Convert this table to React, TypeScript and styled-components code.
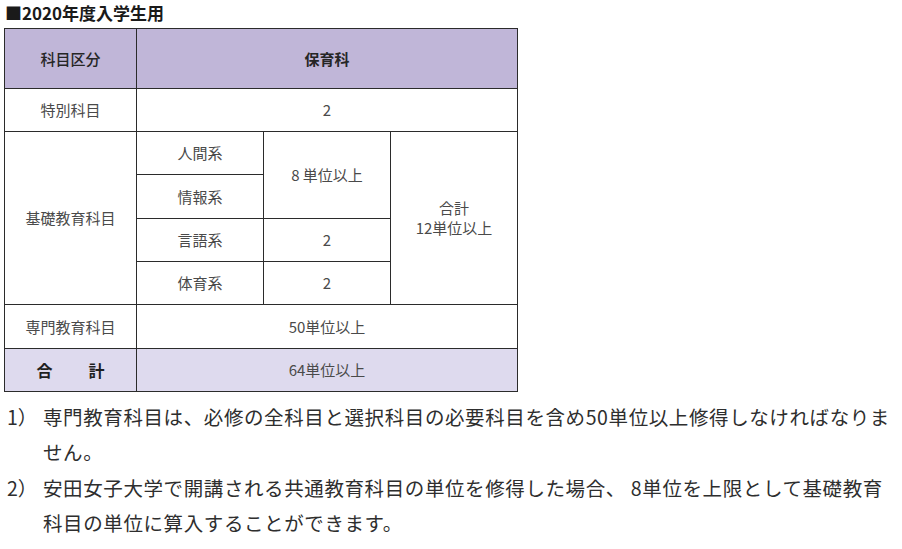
import React from 'react'
import styled, { createGlobalStyle } from 'styled-components'

const GlobalStyle = createGlobalStyle`
  body {
    margin: 0;
    background: #ffffff;
    font-family: "Noto Sans CJK JP", "Liberation Sans", sans-serif;
  }
`

const Page = styled.div`
  padding: 3px 0 0 4px;
  width: 898px;
`

const Title = styled.h2`
  margin: 0 0 5px 1px;
  font-size: 17px;
  line-height: 20px;
  font-weight: 700;
  color: #1a1a1a;
  letter-spacing: 0;
`

const Table = styled.table`
  border-collapse: collapse;
  table-layout: fixed;
  width: 514px;
  color: #4a4a4a;
  font-size: 15px;
  td, th {
    border: 1px solid #2b2b2b;
    text-align: center;
    vertical-align: middle;
    padding: 0;
    line-height: 20px;
  }
`

const Row = styled.tr<{ $h: number }>`
  height: ${p => p.$h}px;
`

const HeadCell = styled.th<{ $bold?: boolean }>`
  background: #c0b6d8;
  color: #262626;
  font-weight: ${p => (p.$bold ? 700 : 500)};
`

const Cell = styled.td`
  font-weight: 400;
`

const TotalLabel = styled.td`
  background: #dedaee;
  color: #1f1f1f;
  font-weight: 700 !important;
  font-size: 16px;
  span + span { margin-left: 36px; }
`

const TotalValue = styled.td`
  background: #dedaee;
`

const Notes = styled.ol`
  list-style: none;
  margin: 7px 0 0 0;
  padding: 0;
  color: #2e2e2e;
  font-size: 19.5px;
  line-height: 35px;
  letter-spacing: 0.6px;
`

const Note = styled.li`
  display: grid;
  grid-template-columns: 39px 1fr;
  margin-bottom: 1px;
`

const Num = styled.span`
  letter-spacing: 0;
  padding-left: 3px;
`

export default function App() {
  return (
    <Page>
      <GlobalStyle />
      <Title>■2020年度入学生用</Title>
      <Table>
        <colgroup>
          <col style={{ width: 132 }} />
          <col style={{ width: 127 }} />
          <col style={{ width: 127 }} />
          <col style={{ width: 127 }} />
        </colgroup>
        <tbody>
          <Row $h={60}>
            <HeadCell>科目区分</HeadCell>
            <HeadCell colSpan={3} $bold>保育科</HeadCell>
          </Row>
          <Row $h={43}>
            <Cell>特別科目</Cell>
            <Cell colSpan={3}>2</Cell>
          </Row>
          <Row $h={43}>
            <Cell rowSpan={4}>基礎教育科目</Cell>
            <Cell>人間系</Cell>
            <Cell rowSpan={2}>8 単位以上</Cell>
            <Cell rowSpan={4}>合計<br />12単位以上</Cell>
          </Row>
          <Row $h={44}>
            <Cell>情報系</Cell>
          </Row>
          <Row $h={43}>
            <Cell>言語系</Cell>
            <Cell>2</Cell>
          </Row>
          <Row $h={43}>
            <Cell>体育系</Cell>
            <Cell>2</Cell>
          </Row>
          <Row $h={44}>
            <Cell>専門教育科目</Cell>
            <Cell colSpan={3}>50単位以上</Cell>
          </Row>
          <Row $h={43}>
            <TotalLabel><span>合</span><span>計</span></TotalLabel>
            <TotalValue colSpan={3}>64単位以上</TotalValue>
          </Row>
        </tbody>
      </Table>
      <Notes>
        <Note>
          <Num>1）</Num>
          <span>専門教育科目は、必修の全科目と選択科目の必要科目を含め50単位以上修得しなければなりません。</span>
        </Note>
        <Note>
          <Num>2）</Num>
          <span>安田女子大学で開講される共通教育科目の単位を修得した場合、 8単位を上限として基礎教育科目の単位に算入することができます。</span>
        </Note>
      </Notes>
    </Page>
  )
}
